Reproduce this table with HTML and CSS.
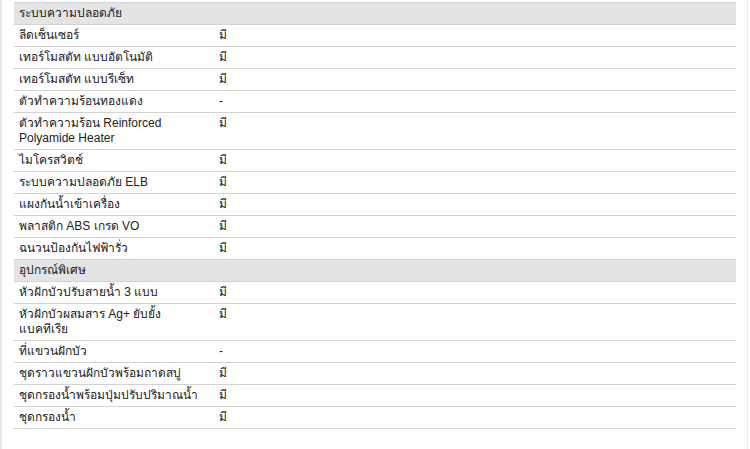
FILE: index.html
```html
<!DOCTYPE html>
<html lang="th">
<head>
<meta charset="utf-8">
<link rel="stylesheet" href="styles.css">
</head>
<body>
<div class="page">
  <table class="spec">
    <tbody>
      <tr class="group"><td colspan="2">ระบบความปลอดภัย</td></tr>
      <tr><td class="k">ลีดเซ็นเซอร์</td><td class="v">มี</td></tr>
      <tr><td class="k">เทอร์โมสตัท แบบอัตโนมัติ</td><td class="v">มี</td></tr>
      <tr><td class="k">เทอร์โมสตัท แบบรีเซ็ท</td><td class="v">มี</td></tr>
      <tr><td class="k">ตัวทำความร้อนทองแดง</td><td class="v">-</td></tr>
      <tr><td class="k">ตัวทำความร้อน Reinforced Polyamide Heater</td><td class="v">มี</td></tr>
      <tr><td class="k">ไมโครสวิตช์</td><td class="v">มี</td></tr>
      <tr><td class="k">ระบบความปลอดภัย ELB</td><td class="v">มี</td></tr>
      <tr><td class="k">แผงกันน้ำเข้าเครื่อง</td><td class="v">มี</td></tr>
      <tr><td class="k">พลาสติก ABS เกรด VO</td><td class="v">มี</td></tr>
      <tr><td class="k">ฉนวนป้องกันไฟฟ้ารั่ว</td><td class="v">มี</td></tr>
      <tr class="group"><td colspan="2">อุปกรณ์พิเศษ</td></tr>
      <tr><td class="k">หัวฝักบัวปรับสายน้ำ 3 แบบ</td><td class="v">มี</td></tr>
      <tr><td class="k">หัวฝักบัวผสมสาร Ag+ ยับยั้งแบคทีเรีย</td><td class="v">มี</td></tr>
      <tr><td class="k">ที่แขวนฝักบัว</td><td class="v">-</td></tr>
      <tr><td class="k">ชุดราวแขวนฝักบัวพร้อมถาดสบู่</td><td class="v">มี</td></tr>
      <tr><td class="k">ชุดกรองน้ำพร้อมปุ่มปรับปริมาณน้ำ</td><td class="v">มี</td></tr>
      <tr><td class="k">ชุดกรองน้ำ</td><td class="v">มี</td></tr>
    </tbody>
  </table>
</div>
</body>
</html>
```
FILE: styles.css
```css
html, body {
  margin: 0;
  padding: 0;
  background: #ffffff;
}
body {
  font-family: "Liberation Sans", Arial, sans-serif;
  font-size: 12px;
  color: #222222;
}
.page {
  width: 748px;
  height: 449px;
  box-sizing: border-box;
  border-left: 2px solid #e6e6e6;
  border-right: 1px solid #ececec;
  padding: 2px 11px 0 12px;
}
.spec {
  width: 100%;
  border-collapse: collapse;
}
.spec td {
  border-top: 1px solid #d3d3d3;
  border-bottom: 1px solid #d3d3d3;
  padding: 3px 5px 3px 5px;
  line-height: 15px;
  vertical-align: top;
  text-align: left;
}
.spec .k {
  width: 190px;
}
.spec .group td {
  background: #e4e4e4;
}
```
